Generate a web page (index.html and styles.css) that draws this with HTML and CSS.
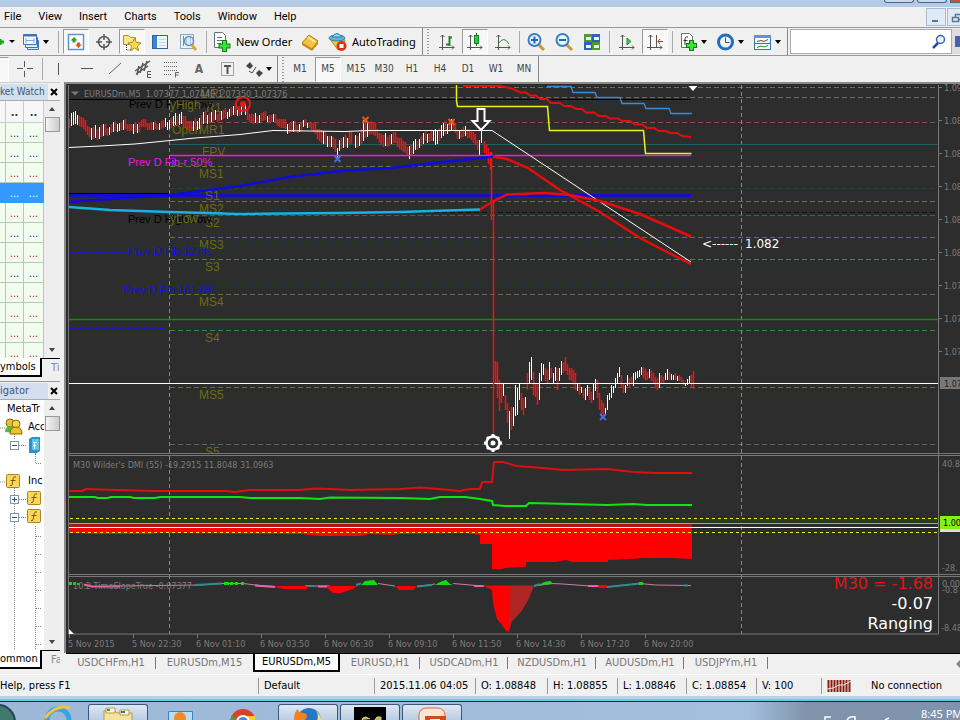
FILE: index.html
```html
<!DOCTYPE html>
<html lang="en">
<head>
<meta charset="utf-8">
<title>EURUSDm,M5</title>
<link rel="stylesheet" href="styles.css">
</head>
<body>
<header class="titlebar"><i></i><i></i><i class="close"></i></header>
<nav class="menubar">
  <button>File</button><button>View</button><button>Insert</button><button>Charts</button><button>Tools</button><button>Window</button><button>Help</button>
  <span class="mdi">
    <button aria-label="Minimize"><svg width="18" height="18"><path d="M5 12h6" stroke="#5a7492" stroke-width="2"/></svg></button>
    <button aria-label="Restore"><svg width="18" height="18" fill="none" stroke="#5a7492"><path d="M7.500 8V5.500h6v5H11M4.500 8.500h6v4h-6z" stroke-width="1.500"/></svg></button>
  </span>
</nav>

<div class="toolbar top">
  <button class="t first" aria-label="New chart"><svg width="18" height="24"><path d="M0 12h4M0 9v6" stroke="#18a818" stroke-width="3"/><path d="M9 10h6l-3 3z"/></svg></button>
  <button class="t drop" aria-label="Profiles"><svg width="20" height="20" fill="#dceaf8" stroke="#3f74b5"><path d="M6.500 8.500h11v9h-11z"/><path d="M4.500 5.500h12v10h-12z"/><path d="M2.500 2.500h13v10h-13z" fill="#f2f8ff"/><path d="M2 3.500h14" stroke-width="2"/><path d="M5 8.500h8M5 6v5M13 6v5" stroke="#86a9d0"/></svg><span class="caret"></span></button>
  <i class="sep s7"></i>
  <button class="t on" aria-label="Market Watch"><svg width="20" height="20"><rect x="2.500" y="2.500" width="15" height="15" fill="#fff" stroke="#5b93cf" stroke-width="1.500"/><path d="M8 5l3.500 3.500H9.500v2h-3v-2H4.500z" fill="#2da02d"/><path d="M12.500 16L9 12.500h2v-2h3v2h2z" fill="#e0561c"/></svg></button>
  <button class="t" aria-label="Data Window"><svg width="20" height="20" fill="none" stroke="#555" stroke-width="1.500"><circle cx="10" cy="10" r="5.500"/><path d="M10 2v6M10 12v6M2 10h6M12 10h6"/></svg></button>
  <button class="t on" aria-label="Navigator"><svg width="20" height="20"><path d="M1.500 3.500h5l2 2h5v7h-12z" fill="#f7e58a" stroke="#b39428"/><path d="M4.500 13v5h6" stroke="#444" fill="none" stroke-dasharray="1 1"/><path d="M12.500 6.500l2 4 4.500.5-3.500 3 1 4.500-4-2.500-4 2.500 1-4.500-3.500-3 4.500-.5z" fill="#f9d84c" stroke="#b08818"/></svg></button>
  <button class="t" aria-label="Terminal"><svg width="20" height="20"><rect x="2.500" y="3.500" width="15" height="13" fill="#eef6ff" stroke="#2e64a6"/><path d="M3 4h4v12H3z" fill="#3e84cc"/><path d="M9 7.500h7M9 10.500h7M9 13.500h7" stroke="#c5d6e8"/></svg></button>
  <button class="t" aria-label="Strategy Tester"><svg width="20" height="20"><rect x="2.500" y="2.500" width="13" height="14" fill="#edf2f7" stroke="#8ba7c4"/><path d="M5.500 4v10M8.500 5v8M12.500 4v10" stroke="#6a8db0"/><circle cx="11" cy="9" r="4.500" fill="#cfe4f8aa" stroke="#6791bd" stroke-width="1.500"/><path d="M14 13l4 5" stroke="#d8ab2c" stroke-width="3"/></svg></button>
  <i class="sep s8"></i>
  <button class="t label order"><svg width="22" height="22"><path d="M3.500 1.500h8l3 3v12h-11z" fill="#fff" stroke="#66737e"/><path d="M6 6.500h5M6 9.500h6M6 12.500h4" stroke="#60707f"/><path d="M13.500 9v12M7.500 15h12" stroke="#0c7f10" stroke-width="5"/><path d="M13.500 10v10M8.500 15h10" stroke="#3ee03c" stroke-width="3"/></svg>New Order</button>
  <button class="t" aria-label="MetaEditor"><svg width="20" height="20"><path d="M2 11l7-8 9 6-6 8z" fill="#f2c341" stroke="#b47b14"/><path d="M2 11l10 6 6-8v3l-6 7-10-6z" fill="#c98a1a"/><path d="M8 5l7 5" stroke="#ffeaa0" stroke-width="2"/></svg></button>
  <button class="t label auto"><svg width="22" height="22"><path d="M3 8l15 1-3 9-4 1z" fill="#f3c93b" stroke="#b88a1c"/><ellipse cx="10" cy="7" rx="8" ry="3" fill="#5fb6dc" stroke="#2d7ea8"/><path d="M5 6q5-7 10 0z" fill="#8fd3ee" stroke="#2d7ea8"/><circle cx="14.500" cy="15" r="5" fill="#d8301c"/><rect x="12.500" y="13" width="4" height="4" fill="#fff"/></svg>AutoTrading</button>
  <i class="edge s11"></i>
  <button class="t" aria-label="Bar chart"><svg width="20" height="20" fill="none" stroke="#555"><path d="M5.500 3v15M2 15.500h15M3.500 5l2-2 2 2M15 13.500l2 2-2 2"/><path d="M12.500 4v10M12 5.500h3M9 12.500h3" stroke="#268030" stroke-width="2"/></svg></button>
  <button class="t on" aria-label="Candlesticks"><svg width="20" height="20" fill="none" stroke="#555"><path d="M5.500 3v15M2 15.500h15M3.500 5l2-2 2 2M15 13.500l2 2-2 2"/><path d="M11.500 1v13" stroke="#176c1d"/><rect x="9.500" y="3.500" width="4" height="8" fill="#26cf37" stroke="#16821f"/></svg></button>
  <button class="t" aria-label="Line chart"><svg width="20" height="20" fill="none" stroke="#555"><path d="M5.500 3v15M2 15.500h15M3.500 5l2-2 2 2M15 13.500l2 2-2 2"/><path d="M5 12q6-9 11 0" stroke="#338844"/></svg></button>
  <i class="sep s5"></i>
  <button class="t" aria-label="Zoom in"><svg width="20" height="20"><path d="M12 12l6 6" stroke="#c89c2a" stroke-width="3"/><circle cx="8.500" cy="8" r="6" fill="#e8f5ff" stroke="#3a7fc6" stroke-width="2"/><path d="M5 8h7M8.500 4.500v7" stroke="#2369b8" stroke-width="2"/></svg></button>
  <button class="t" aria-label="Zoom out"><svg width="20" height="20"><path d="M12 12l6 6" stroke="#c89c2a" stroke-width="3"/><circle cx="8.500" cy="8" r="6" fill="#e8f5ff" stroke="#3a7fc6" stroke-width="2"/><path d="M5 8h7" stroke="#2369b8" stroke-width="2"/></svg></button>
  <button class="t" aria-label="Tile windows"><svg width="20" height="20"><path d="M2 2h8v8H2zM10 10h8v8h-8z" fill="#4f9a28"/><path d="M10 2h8v8h-8zM2 10h8v8H2z" fill="#2c62b8"/><path d="M4 5h5v3H4zM12 5h5v3h-5zM4 13h5v3H4zM12 13h5v3h-5z" fill="#e5f4f4"/></svg></button>
  <i class="sep s7"></i>
  <button class="t" aria-label="Auto scroll"><svg width="20" height="20" fill="none" stroke="#555"><path d="M5.500 3v15M2 15.500h15M3.500 5l2-2 2 2M15 13.500l2 2-2 2"/><path d="M10 6v7l4-3.500z" fill="#4bc95a" stroke="#2b8b35"/></svg></button>
  <button class="t on" aria-label="Chart shift"><svg width="20" height="20" fill="none" stroke="#555"><path d="M5.500 3v15M2 15.500h15M3.500 5l2-2 2 2M15 13.500l2 2-2 2M11.500 3v12"/><path d="M18 9.500h-5M15 7l-2 2.500 2 2.500" stroke="#a53a22"/></svg></button>
  <i class="sep s7"></i>
  <button class="t drop" aria-label="Indicators"><svg width="20" height="20"><path d="M2.500 1.500h8l3 3v11h-11z" fill="#fff" stroke="#66737e"/><path d="M9 5q-3-1-3 3v5M4.500 8.500h4" stroke="#333" fill="none"/><path d="M12.500 8v11M7 13.500h11" stroke="#0c7f10" stroke-width="5"/><path d="M12.500 9v9M8 13.500h9" stroke="#3ee03c" stroke-width="3"/></svg><span class="caret"></span></button>
  <button class="t drop" aria-label="Periods"><svg width="20" height="20"><circle cx="9.500" cy="10" r="7" fill="#eaf6ff" stroke="#1f6fc0" stroke-width="3"/><path d="M9.500 5.500v5h4" stroke="#6a4433" fill="none"/></svg><span class="caret"></span></button>
  <button class="t drop" aria-label="Templates"><svg width="20" height="20"><rect x="1.500" y="3.500" width="16" height="14" fill="#f3fbff" stroke="#3a75b4"/><path d="M1 4.500h17" stroke="#5c97d2" stroke-width="3"/><path d="M2 11.500h15" stroke="#3a75b4"/><path d="M4 9.500l4-1 3 1 4-2" stroke="#a03030" fill="none"/><path d="M4 15.500l4-1.500 3 1 4-1.500" stroke="#2a8a38" fill="none"/></svg><span class="caret"></span></button>
  <i class="edge s3"></i>
  <label class="search"><input type="search" aria-label="Search"><svg width="16" height="16"><circle cx="9.500" cy="5.500" r="4" fill="#eaf2ff" stroke="#3c62b4" stroke-width="1.500"/><path d="M7 9l-5 5" stroke="#2a49a0" stroke-width="2.500"/></svg></label>
  <button class="t chat" aria-label="Chat"><svg width="8" height="20"><path d="M3 4h5v11H3z" fill="#4763a5"/></svg></button>
</div>

<div class="toolbar low">
  <button class="t on cursor" aria-label="Cursor"></button>
  <button class="t" aria-label="Crosshair"><svg width="20" height="20" stroke="#555"><path d="M9.500 2v6M9.500 12v6M2 9.500h6M12 9.500h6"/></svg></button>
  <i class="sep s6"></i>
  <button class="t" aria-label="Vertical line"><svg width="20" height="20" stroke="#555"><path d="M9.500 4v12"/></svg></button>
  <button class="t" aria-label="Horizontal line"><svg width="20" height="20" stroke="#555"><path d="M4 9.500h12"/></svg></button>
  <button class="t" aria-label="Trendline"><svg width="20" height="20" stroke="#666"><path d="M4 15L16 4"/></svg></button>
  <button class="t" aria-label="Equidistant channel"><svg width="20" height="20" fill="none" stroke="#555" stroke-width="1.500"><path d="M2 12L17 2M3 15L15 7M6 7l-2 9M10 4L7 14M14 2l-3 10"/><path d="M18 12.500h-3.500v6H18M15 15.500h3" stroke-width="1"/></svg></button>
  <button class="t" aria-label="Fibonacci"><svg width="20" height="20" fill="none" stroke="#666"><path d="M3 3.500h14M3 7.500h14M3 11.500h14M3 15.500h8" stroke-dasharray="1 1"/><path d="M18 13.500h-3.500v5M14.500 16h3"/></svg></button>
  <button class="t glyph" aria-label="Text">A</button>
  <button class="t" aria-label="Text label"><svg width="20" height="20" fill="none" stroke="#555"><rect x="4.500" y="3.500" width="12" height="13" stroke-dasharray="1 1"/><path d="M7 7h7M10.500 7v8" stroke-width="2"/></svg></button>
  <button class="t drop" aria-label="Arrows"><svg width="20" height="20" fill="#444"><path d="M2 7l4-4 3 4-3 3zM12 14l3-3 4 3-4 4z"/><path d="M5 12l3 2 4-6" stroke="#444" fill="none"/></svg><span class="caret"></span></button>
  <i class="edge s9"></i>
  <button class="t">M1</button><button class="t on">M5</button><button class="t">M15</button><button class="t">M30</button><button class="t">H1</button><button class="t">H4</button><button class="t">D1</button><button class="t">W1</button><button class="t">MN</button>
  <i class="edge bare"></i>
</div>

<main class="work">
  <aside class="side">
    <section class="pane market">
      <h2><span>ket Watch</span><button aria-label="Close Market Watch"><svg width="12" height="12"><path d="M3 3l6 6M9 3l-6 6" stroke="#000" stroke-width="2"/></svg></button></h2>
      <div class="body">
        <table>
          <thead><tr><th></th><th>..</th><th>..</th></tr></thead>
          <tbody>
            <tr><td></td><td>...</td><td>...</td></tr>
            <tr><td></td><td>...</td><td>...</td></tr>
            <tr class="down"><td></td><td>...</td><td>...</td></tr>
            <tr class="sel"><td></td><td>...</td><td>...</td></tr>
            <tr class="down"><td></td><td>...</td><td>...</td></tr>
            <tr><td></td><td>...</td><td>...</td></tr>
            <tr class="down"><td></td><td>...</td><td>...</td></tr>
            <tr><td></td><td>...</td><td>...</td></tr>
            <tr class="down"><td></td><td>...</td><td>...</td></tr>
            <tr class="down"><td></td><td>...</td><td>...</td></tr>
            <tr class="down"><td></td><td>...</td><td>...</td></tr>
            <tr class="down"><td></td><td>...</td><td>...</td></tr>
          </tbody>
        </table>
        <div class="scroll"><b class="up"></b><b class="thumb"></b><b class="dn"></b></div>
      </div>
      <div class="tabs"><button class="active">ymbols</button><button>Tic</button></div>
    </section>
    <section class="pane navi">
      <h2><span>igator</span><button aria-label="Close Navigator"><svg width="12" height="12"><path d="M3 3l6 6M9 3l-6 6" stroke="#000" stroke-width="2"/></svg></button></h2>
      <div class="body">
        <div class="tree">
          <p class="root">MetaTr</p>
          <p><svg width="28" height="18"><path d="M0 10h5M14.500 16v2" stroke="#888" stroke-dasharray="1 1"/><circle cx="10" cy="5" r="4" fill="#e8c030" stroke="#8a6a10"/><path d="M5 14q0-6 6-6t5 7z" fill="#52bf35"/><circle cx="16" cy="6" r="4" fill="#f5d648" stroke="#8a6a10"/><path d="M10 16q0-7 6-7t6 7z" fill="#edc22c" stroke="#8a6a10"/></svg>Acc</p>
          <p><svg width="44" height="18"><path d="M14.500 0v4M19 9.500h7M35.500 17v1" stroke="#888" stroke-dasharray="1 1"/><rect x="10.500" y="5.500" width="8" height="8" fill="#fff" stroke="#8895a5"/><path d="M12 9.500h5" stroke="#36517c"/><path d="M29 3l3-2h8v14l-3 2h-8z" fill="#2793d2"/><path d="M32 3h7v11h-7z" fill="#63c2ee"/><path d="M33 6.500h4M33 9.500h3M34.500 6v7" stroke="#fff" fill="none"/></svg></p>
          <p><svg width="44" height="18"><path d="M35.500 0v9M36 9.500h6" stroke="#888" fill="none" stroke-dasharray="1 1"/></svg></p>
          <p><svg width="28" height="18"><path d="M0 10h5M14.500 16v2" stroke="#888" stroke-dasharray="1 1"/><use href="#fx" x="6" y="2"/></svg>Inc</p>
          <p><svg width="44" height="18"><path d="M14.500 0v18M19 9.500h7" stroke="#888" stroke-dasharray="1 1"/><rect x="10.500" y="5.500" width="8" height="8" fill="#fff" stroke="#8895a5"/><path d="M12 9.500h5M14.500 7v5" stroke="#36517c"/><use href="#fx" x="27" y="1"/></svg></p>
          <p><svg width="44" height="18"><path d="M14.500 0v18M19 9.500h7" stroke="#888" stroke-dasharray="1 1"/><rect x="10.500" y="5.500" width="8" height="8" fill="#fff" stroke="#8895a5"/><path d="M12 9.500h5" stroke="#36517c"/><use href="#fx" x="27" y="1"/></svg></p>
          <svg class="branch" width="44" height="126"><path d="M14.500 0v126M35.500 0v126M36 10.500h6M36 28.500h6M36 46.500h6M36 64.500h6M36 82.500h6M36 100.500h6M36 118.500h6" stroke="#888" stroke-dasharray="1 1"/></svg>
        </div>
        <div class="scroll"><b class="up"></b><b class="thumb"></b><b class="dn"></b></div>
      </div>
      <div class="tabs"><button class="active">ommon</button><button>Fa</button></div>
    </section>
  </aside>

  <section class="chartwin">
    <svg id="chart" viewBox="64 82 896 571" preserveAspectRatio="xMinYMin meet" role="img" aria-label="EURUSDm M5 chart">
      <defs>
        <g id="fx"><rect x=".5" y=".5" width="13" height="13" rx="1" fill="#f8d75a" stroke="#ab8420"/><path d="M10 3q-3-1-3 3l-1 5q-.5 1-2 .500M4.500 6.500h5" stroke="#7c5a08" fill="none"/></g>
        <clipPath id="main"><rect x="69" y="85" width="870" height="368"/></clipPath>
      </defs>
      <path d="M64 82h896v3H66v568h-2z" fill="#8a8a8a"/>
      <path d="M66 84h894v569H66z" fill="#2d2d2d"/>
      <g id="levels"></g>
      <path d="M169.500 85v549M741.500 85v549" stroke="#888" stroke-dasharray="4 3"/>
      <g fill="none">
        <path d="M68 99.500h623" stroke="#000"/><path d="M69 193.500h100" stroke="#000"/>
        <path d="M170 144.500h768" stroke="#1c6262"/>
        <path d="M68 319.500h870" stroke="#08900c" stroke-width="1.500"/>
        <path d="M69 195.500h622" stroke="#1010c8" stroke-width="3"/>
        <path d="M170 243.500h520M69 252.500h60M170 283.500h520M69 328.500h95" stroke="#1414d8" stroke-dasharray="6 2"/>
      </g>
      <g class="lvl" clip-path="url(#main)">
        <text x="200" y="98">MR2</text><text x="206" y="112">R1</text><text x="199" y="134">MR1</text><text x="172" y="134">Open</text><text x="202" y="156">FPV</text><text x="199" y="178">MS1</text><text x="205" y="200">S1</text><text x="199" y="213">MS2</text><text x="205" y="227">S2</text><text x="199" y="249">MS3</text><text x="205" y="271">S3</text><text x="199" y="306">MS4</text><text x="205" y="342">S4</text><text x="199" y="399">MS5</text><text x="205" y="456">S5</text>
      </g>
      <g class="prev">
        <text x="129" y="108" fill="#000">Prev D High-Low</text><text x="128" y="223" fill="#000">Prev D High-Low</text>
        <text class="olive" x="170" y="109">yHigh</text><text class="olive" x="170" y="223">yLow</text>
        <text x="128" y="166" fill="#e818e8">Prev D Fib-r 50%</text>
        <text x="128" y="255" fill="#1212dc">Prev D Fib  127%</text>
        <text x="123" y="294" fill="#1212dc">Prev D Fib  161.8%</text>
      </g>
      <g fill="none">
        <path id="reds" stroke="#f01414" stroke-width="1.500"/><path id="whites" stroke="#fff"/>
        <path d="M170 155.500h521" stroke="#f018f0" stroke-width="1.500"/>
        <path d="M69 202L110 199 170 195 240 186 290 177 340 171 390 168 480 158 495 156.500" stroke="#0c0cdc" stroke-width="2.500"/>
        <path d="M69 207L110 210 170 212 240 214 340 213 400 212 480 209.500" stroke="#16b4e0" stroke-width="2.500"/>
        <path d="M69 147.500L100 146 135 144 170 140.500 195 138 240 134.500 273 130.500 345 131.500 370 130.500 H492 L691 262" stroke="#fff"/>
        <path d="M480 209.500L492 202 507 194.500 545 193 570 195 600 201 640 214 691 236.500" stroke="#e80c0c" stroke-width="2.500"/>
        <path d="M493 156.500L507 159 528 168 560 190 600 212 640 238 665 251 691 264" stroke="#e80c0c" stroke-width="2.500"/>
        <path d="M463 86H500L513 89 520 92.500H526L530 95.500H536L540 99H547L551 103H560L564 106H571L576 109H582L586 112.500H594L599 116H606L610 118.500H618L622 121H630L635 124.500H642L647 128H654L659 131H666L670 133H677L682 136 691 137" stroke="#e80c0c" stroke-width="2"/>
        <path d="M547 86.500h24l2 6h22l2 5h23l2 6h22l2 5h23l2 5h21" stroke="#3c8ad8" stroke-width="1.300"/>
        <path d="M456.500 85v16l1 5.500h90l2 24h94l2 23h46" stroke="#f0f010" stroke-width="1.500"/>
        <path d="M68 383.500h871" stroke="#fff"/>
        <path d="M493.500 200v233" stroke="#f01414" stroke-width="1.500"/>
      </g>
      <g fill="none" stroke-width="2">
        <circle cx="243" cy="104" r="7" stroke="#f01414"/><circle cx="243" cy="104" r="2" fill="#f01414" stroke="#f01414"/>
        <path d="M362.500 117l6 6M368.500 117l-6 6M448.500 119l6 6M454.500 119l-6 6" stroke="#f0561c"/>
        <path d="M334.500 156l6 6M340.500 156l-6 6M600 414l6 6M606 414l-6 6" stroke="#4a6ae0"/>
        <path d="M477.500 109h7v12h5l-8.500 9-8.500-9h5z" fill="#2d2d2d" stroke="#fff"/>
        <circle cx="493" cy="443" r="6.500" stroke="#fff" stroke-width="2.500"/><circle cx="493" cy="443" r="2.500" fill="#fff"/>
        <path d="M493 434v2M493 450v2M484 443h2M500 443h2M487 437l1 1M499 437l-1 1M487 449l1-1M499 449l-1-1" stroke="#fff" stroke-width="3"/>
      </g>
      <path d="M688.500 86h9l-4.500 5z" fill="#fff"/>
      <path d="M71 91.500h8l-4 4z" fill="#777"/>
      <g class="tiny">
        <text x="84" y="97" xml:space="preserve">EURUSDm,M5  1.07377 1.07440 1.07350 1.07376</text>
        <text x="73" y="468">M30 Wilder's DMI (55) -19.2915 11.8048 31.0963</text>
      </g>
      <g class="note"><text x="702" y="248">&lt;------</text><text x="745" y="248">1.082</text></g>

      <path d="M69 519h870v4H69z" fill="#2a3c1c"/>
      <path d="M69 524h623v3H69z" fill="#a81818"/>
      <path d="M69 527H692V559L670 558H643L632 559 608 560V562H572L566 560 555 562H526V567L504 568 503 569H492V544H480V535L465 533 400 534 390 535 370 534 360 536H320L300 534 160 533 150 534H90L80 533H69z" fill="#f00"/>
      <g fill="none">
        <path d="M69 491H82L86 489 100 489.500 155 491H225L235 492 250 490 300 490 315 488.500 330 489 350 490 400 489 420 487.500 450 490 460 491 470 489H480L482 482H492L494 462H503L517 466 543 468 563 470 607 469 633 472 657 473H692" stroke="#dc1010" stroke-width="2"/>
        <path d="M69 497H95L98 498H108L111 497H130L134 498H155L160 497H240L250 498H300L320 499 330 497.500 400 498 430 499 440 497H465L480 499 492 501 493 505 505 506H526L529 503 570 504 607 505 633 504 647 505H692" stroke="#12e412" stroke-width="2"/>
        <path d="M69 523.500h870" stroke="#8fc42a"/><path d="M69 527.500h870" stroke="#fff"/>
        <path d="M70 518.500h869M70 532.500h869" stroke="#f4f020" stroke-dasharray="3 3"/>
      </g>

      <g fill="none">
        <path d="M110 586L200 585 222 583.500H243L260 585.500 275 586.500M305 586H330M378 583.500L395 586M417 586.500L435 584M453 583.500L482 586M534 586L552 583.500 563 584 590 586 607 587 640 583.500 655 585 691 585.500" stroke="#c880a4"/>
        <path d="M195 585L222 583.500M305 586H314M356 585L361 583.500M417 586.500L432 585M534 586L540 584M607 587L640 583.500M684 585.500h4" stroke="#2f8c8c" stroke-width="2"/>
        <path d="M84 584.500L92 586.500 120 586.500M255 585.500L275 587M318 586.500h10M474 586h10M588 586h10" stroke="#f060a8" stroke-width="2"/>
      </g>
      <path d="M482 585.500h27v46.500l-3-1-4-6-5-6-4-16-1-13-6-3zM275 586h32v3h-24l-8-2zM327 586h30l-4 3-12 4h-8l-6-5zM395 586h22l-4 4h-14zM598 585h9v3h-9z" fill="#f00"/>
      <path d="M509 585.500h25l-5 13-7 12-10 11-3 10z" fill="#b02424"/>
      <path d="M361 585l4-4 9-1 4 5zM435 585l5-3 6-2 4 4 3 1zM539 585l5-3 6-1 4 3zM69 582h3v3h-3zM73 582h3v3h-3zM77 583h3v2h-3zM224 582h5v3h-5zM230 582h3v3h-3zM235 582h3v3h-3zM241 582h3v3h-3zM639 582h4v3h-4z" fill="#14d814"/>
      <path d="M68.500 85v549h870V85M68 453.500h892M68 455.500h892M68 574.500h892M68 576.500h892" fill="none" stroke="#777"/>
      <path d="M69 629v5h5z" fill="#fff"/>
      <g class="tiny"><text x="73" y="589">10.2 TimeSlopeTrue -0.07377</text></g>
      <g class="info" text-anchor="end"><text x="933" y="589" fill="#e01414">M30 = -1.68</text><text x="933" y="609" fill="#fff">-0.07</text><text x="933" y="629" fill="#fff">Ranging</text></g>
      <g id="axis" class="tiny"></g>
    </svg>
    <nav class="charttabs">
      <button>USDCHFm,H1</button><button>EURUSDm,M15</button><button class="active">EURUSDm,M5</button><button>EURUSD,H1</button><button>USDCADm,H1</button><button>NZDUSDm,H1</button><button>AUDUSDm,H1</button><button>USDJPYm,H1</button><span class="more"></span>
    </nav>
  </section>
</main>

<footer class="status">
  <span>Help, press F1</span><span>Default</span><span>2015.11.06 04:05</span><span>O: 1.08848</span><span>H: 1.08855</span><span>L: 1.08846</span><span>C: 1.08854</span><span>V: 100</span>
  <span class="net"><svg width="24" height="12"><path d="M1.500 0v12M4.500 0v12M7.500 0v12M10.500 0v12M13.500 0v12M16.500 0v12M19.500 0v12M22.500 0v12" stroke="#8c1c10" stroke-width="2"/><path d="M0 9l6-1 6-3h5l7-4" stroke="#efe4d8" fill="none"/></svg>No connection</span>
</footer>
<div class="taskbar">
  <svg width="28" height="18"><circle cx="-2" cy="20" r="17" fill="#3f7a6c" stroke="#24435e" stroke-width="2"/></svg>
  <svg class="wide" width="60" height="18"><circle cx="30" cy="18" r="11" fill="none" stroke="#38a4e4" stroke-width="5"/><path d="M17 16Q28 2 42 6" stroke="#f0c43c" stroke-width="3" fill="none"/></svg>
  <button class="app" aria-label="Explorer"><svg width="32" height="14"><path d="M2 4h11l2 2h15v8H2z" fill="#f5e2a0" stroke="#b79a50"/><path d="M4 1h9v5H4zM18 3h9v5h-9z" fill="#fdf6d4" stroke="#b79a50"/><path d="M5 3h3" stroke="#3a9a3a" stroke-width="2"/><path d="M19 5h4" stroke="#3a6ac0" stroke-width="2"/></svg></button>
  <svg class="wide" width="64" height="18"><path d="M18.500 9.500h24v10h-24z" fill="#b9dcf2" stroke="#3c84b8"/><circle cx="30" cy="16" r="6" fill="#f08a28"/></svg>
  <svg class="wide" width="64" height="18"><circle cx="29" cy="20" r="13" fill="#d8402c"/><path d="M18 13a13 13 0 0 0 0 10l6-4z" fill="#40a048"/><path d="M28 14h13q2 6 0 9z" fill="#f4ca38"/><circle cx="29" cy="20" r="6" fill="#4a86d8" stroke="#fff" stroke-width="2"/></svg>
  <button class="app" aria-label="Firefox"><svg width="32" height="14"><circle cx="17" cy="13" r="12" fill="#2a76c4"/><path d="M2 14Q2 4 6 2q0 4 6 4 6 2 0 8z" fill="#f08420"/><path d="M24 4q6 5 5 10h-4q2-6-1-10z" fill="#f3dc7a"/></svg></button>
  <button class="app" aria-label="MetaTrader"><svg width="32" height="14"><path d="M0 0h32v14H0z"/><path d="M8 13q0-3 4-3l4 2M20 14l3-4h4v4z" stroke="#d8cf80" fill="#bdb268"/></svg></button>
  <button class="app" aria-label="PowerPoint"><svg width="32" height="14"><rect x="3" y="1" width="26" height="20" rx="7" fill="#fbe4d8" stroke="#d8683c"/><path d="M9 9h21v5H9z" fill="#d44a1c"/><path d="M14 12h10v2H14z" fill="#fff"/></svg></button>
  <div class="tray"><svg width="100" height="18" fill="none" stroke="#fff" stroke-width="1.500"><path d="M4 18v-3h6M26 18q2-4 8-3v3M64 18l4-2"/></svg><time>8:45 PM</time></div>
</div>
<script src="chart.js"></script>
</body>
</html>
```
FILE: styles.css
```css
* { box-sizing: border-box; }
html, body { height: 100%; }
body {
  margin: 0;
  display: flex;
  flex-direction: column;
  overflow: hidden;
  background: #f0f0f0;
  color: #000;
  font: 11px/14px "DejaVu Sans Condensed", "Noto Sans", sans-serif;
}
button { font: inherit; color: inherit; background: none; border: 0; margin: 0; padding: 0; white-space: nowrap; }
svg { display: block; flex: none; }

.titlebar { flex: 0 0 7px; background: #b5cbe5; display: flex; justify-content: flex-end; gap: 3px; }
.titlebar i { width: 30px; height: 3px; border: 1px solid #4d6686; border-top: 0; border-radius: 0 0 3px 3px; background: #c9daee; }
.titlebar .close { width: 10px; background: #c8503c; border-right: 0; border-radius: 0; }

.menubar { flex: 0 0 20px; display: flex; align-items: center; padding-left: 4px; gap: 17px; font: 11px/16px Roboto, "Noto Sans", sans-serif; }
.mdi { margin-left: auto; display: flex; gap: 1px; width: 34px; overflow: hidden; }
.mdi button { flex: 0 0 18px; height: 18px; border: 1px solid #a9bdd4; background: #dfeaf7; }

.toolbar { display: flex; align-items: center; border-top: 1px solid #999; }
.top { flex: 0 0 28px; }
.low { flex: 0 0 27px; color: #444; font-size: 10px; }
.t { flex: 0 0 28px; height: 25px; display: flex; align-items: center; justify-content: center; }
.t.on { flex-basis: 26px; margin: 0 1px; background: #f8f8f8; border: 1px solid #fff; border-top-color: #999; border-left-color: #999; }
.first { flex-basis: 18px; }
.drop { flex-basis: 37px; justify-content: flex-start; padding-left: 3px; gap: 2px; }
.low .drop { flex-basis: 36px; }
.label { font: 11px/14px "Noto Sans", sans-serif; gap: 3px; justify-content: flex-start; padding-left: 1px; }
.order { flex-basis: 86px; }
.auto { flex-basis: 98px; padding-left: 3px; }
.low .cursor { flex-basis: 9px; margin: 0 2px 0 0; border-left: 0; }
.glyph { font: bold 12px/14px "DejaVu Sans Condensed", sans-serif; color: #666; }
.caret { border: 3px solid transparent; border-top: 4px solid #000; border-bottom: 0; width: 0; }
.sep, .edge { align-self: stretch; display: block; }
.sep { background: linear-gradient(#aaa, #aaa) center / 1px 22px no-repeat; }
.edge { border-left: 1px solid #888; background: radial-gradient(circle, #999 30%, transparent 40%) 3px 0 / 4px 3px repeat-y; }
.edge.bare, .edge.s3 { background: none; }
.s3 { flex: 0 0 3px; } .s5 { flex: 0 0 5px; } .s6 { flex: 0 0 6px; } .s7 { flex: 0 0 7px; } .s8 { flex: 0 0 8px; } .s9 { flex: 0 0 9px; } .s11 { flex: 0 0 11px; }
.search { flex: 1 1 0; min-width: 0; overflow: hidden; display: flex; align-items: center; height: 25px; background: #fff; border: 1px solid #aaa; padding-right: 4px; }
.search input { flex: 1 1 0; width: 0; min-width: 0; padding: 0; border: 0; outline: 0; height: 20px; background: none; }
.chat { flex: 0 0 8px; background: #ddd; }

.work { flex: 1; min-height: 0; display: flex; }
.side { flex: 0 0 64px; display: flex; flex-direction: column; padding-right: 4px; overflow: hidden; }
.pane { display: flex; flex-direction: column; min-height: 0; }
.market { flex: 0 0 299px; border-top: 1px solid #ccc; }
.navi { flex: 1; border-top: 1px solid #999; }
.pane h2 { margin: 0; flex: 0 0 17px; display: flex; align-items: center; font-size: 11px; font-weight: normal; line-height: 16px; color: #44566e; }
.pane h2 span { background: #d3dfee; flex: 0 0 48px; width: 48px; white-space: nowrap; }
.pane h2 button { flex: 0 0 12px; }
.market h2 span { font-size: 10px; }
.body { flex: 1; min-height: 0; display: flex; overflow: hidden; background: #fff; border-top: 1px solid #aaa; }
.market .body { flex: 0 0 258px; }
table { flex: 0 0 44px; width: 44px; border-collapse: separate; border-spacing: 0; table-layout: fixed; align-self: flex-start; }
th, td { padding: 2px 0 0; height: 20px; text-align: center; font-size: 11px; line-height: 14px; color: #1818a0; border-right: 1px solid #b8c8b8; border-bottom: 1px solid #b8c8b8; background: #f2fdf0; width: 20px; }
th:first-child, td:first-child { width: 6px; }
th:nth-child(2), td:nth-child(2) { width: 18px; }
th { height: 22px; color: #333; background: #f6f6f6; border-color: #ccc; }
.down td { color: #b01818; }
.sel td { color: #fff; background: #3399ff; border-color: #3399ff; }
.scroll { flex: 0 0 16px; display: flex; flex-direction: column; background: #eee; }
.scroll b { align-self: center; }
.up { margin-top: 6px; border: 3px solid transparent; border-top: 0; border-bottom: 4px solid #444; }
.thumb { margin-top: 6px; width: 15px; height: 15px; background: linear-gradient(90deg, #f4f4f4, #ccc); border: 1px solid #999; }
.dn { margin-top: auto; margin-bottom: 6px; border: 3px solid transparent; border-bottom: 0; border-top: 4px solid #444; }
.tabs { flex: 0 0 24px; display: flex; align-items: flex-start; overflow: hidden; }
.tabs button { flex: none; height: 19px; text-align: left; color: #888; padding-left: 9px; border-top: 1px solid #000; }
.tabs .active { width: 42px; padding: 0; color: #000; background: #fff; border: solid #000; border-width: 0 2px 2px 0; }
.tree { flex: 0 0 44px; overflow: hidden; font-size: 11px; }
.tree p { margin: 0; height: 18px; display: flex; align-items: center; white-space: nowrap; }
.tree .root { padding-left: 7px; }

.chartwin { flex: 1; min-width: 0; display: flex; flex-direction: column; }
#chart { flex: 1; min-height: 0; width: 100%; background: #2d2d2d; }
.lvl { font: 12px "Liberation Sans", sans-serif; fill: #6c6c10; }
.prev { font: 11px "Liberation Sans", sans-serif; }
.prev .olive { font-size: 12px; fill: #6c6c10; }
.tiny { font: 9px "DejaVu Sans Condensed", sans-serif; fill: #7c7c7c; }
.note { font: 12px "DejaVu Sans", sans-serif; fill: #fff; }
.info { font: 16px "DejaVu Sans", sans-serif; }
.charttabs { flex: 0 0 21px; margin-left: 2px; display: grid; grid-template-columns: 90px 97px 87px 80px 88px 88px 88px 84px 1fr; border-top: 1px solid #000; color: #777; font-size: 11px; }
.charttabs button { background: linear-gradient(#777, #777) right center / 1px 12px no-repeat; height: 18px; }
.charttabs button:nth-child(2) { background: none; }
.charttabs .active { background: #fff; color: #000; border: solid #000; border-width: 0 2px 2px; }
.more { justify-self: end; align-self: center; border: 4px solid transparent; border-right-color: #888; }

.status { flex: 0 0 22px; display: grid; grid-template-columns: 258px 116px 101px 72px 70px 69px 70px 65px 1fr; align-items: center; border-top: 1px solid #fff; white-space: nowrap; }
.status span { padding-left: 5px; line-height: 16px; border-left: 1px solid #999; }
.status span:first-child { padding-left: 0; border: 0; }
.status .net { display: flex; align-items: center; gap: 20px; }
.taskbar { flex: 0 0 24px; display: flex; align-items: flex-end; overflow: hidden; border-top: 3px solid #b8d0ea; background: linear-gradient(#5fd0ea, #5fd0ea) top / 100% 2px no-repeat, linear-gradient(#122, #122) 0 2px / 100% 1px no-repeat, linear-gradient(90deg, #9db8d6, #a4bedd 78%, #7f93ad 84%, #7f93ad); }
.app { flex: 0 0 60px; height: 16px; margin-right: 2px; padding-top: 2px; display: flex; justify-content: center; border: 1px solid #3e5878; border-bottom: 0; border-radius: 3px 3px 0 0; background: linear-gradient(#dce8f4, #b9cde3); }
.tray { margin-left: auto; display: flex; align-items: flex-end; height: 18px; color: #fff; white-space: nowrap; }
.tray time { font: 11px/12px "Noto Sans", sans-serif; height: 12px; width: 39px; }
```
FILE: chart.js
```javascript
const NS = "http://www.w3.org/2000/svg";
function add(parent, tag, attrs, text) {
  const el = document.createElementNS(NS, tag);
  for (const k in attrs) el.setAttribute(k, attrs[k]);
  if (text) el.textContent = text;
  parent.appendChild(el);
}

// Dashed pivot levels: y and colour
const levels = document.getElementById("levels");
[[87, "#74742c"], [97, "#6c6c6c"], [122, "#8c4c54"], [166, "#6f6f45"], [188, "#234a28"],
 [201, "#6f6f35"], [212, "#111"], [215, "#2c7438"], [237, "#6f6f35"], [259, "#4f7f55"],
 [294, "#5f6f3c"], [330, "#3f8048"], [387, "#5f7040"], [444, "#4f7050"]
].forEach(([y, c]) => add(levels, "path", { d: `M170 ${y}.5H938`, stroke: c, "stroke-dasharray": "5 3" }));

// Price bars before the drop: start x, end x, top and bottom at each end, colour pattern
const runs = [
  [69, 70, 118, 127, 118, 127, "r"], [71, 77, 113, 126, 113, 124, "w"], [79, 89, 115, 125, 126, 136, "r"],
  [91, 99, 128, 140, 126, 138, "wr"], [101, 109, 125, 137, 126, 134, "rwr"], [111, 117, 124, 133, 122, 131, "rw"],
  [119, 125, 122, 130, 121, 130, "wr"], [127, 131, 122, 130, 124, 131, "r"], [133, 139, 125, 134, 121, 131, "wr"],
  [141, 151, 120, 127, 122, 130, "r"], [153, 165, 123, 130, 120, 128, "wrr"], [167, 181, 120, 129, 112, 124, "wwr"],
  [183, 191, 117, 127, 121, 131, "r"], [193, 201, 122, 131, 115, 127, "wrw"], [203, 213, 113, 124, 112, 121, "wr"],
  [215, 227, 112, 121, 110, 118, "wrr"], [229, 241, 108, 116, 104, 115, "wr"], [243, 247, 104, 112, 108, 119, "rw"],
  [249, 253, 113, 121, 115, 124, "r"], [255, 261, 115, 124, 113, 121, "wr"], [263, 273, 113, 121, 115, 122, "rrw"],
  [275, 285, 116, 124, 121, 130, "r"], [287, 301, 122, 133, 123, 131, "wrr"], [303, 309, 121, 127, 121, 127, "wr"],
  [311, 321, 122, 130, 130, 143, "r"], [323, 331, 132, 144, 136, 147, "wr"], [333, 335, 138, 149, 141, 153, "r"],
  [337, 337, 146, 159, 146, 159, "w"], [339, 347, 139, 150, 136, 147, "wr"], [349, 351, 131, 143, 132, 144, "r"],
  [355, 361, 137, 149, 129, 144, "wr"], [363, 369, 121, 141, 121, 134, "wr"], [371, 377, 121, 134, 127, 138, "r"],
  [379, 383, 132, 142, 136, 147, "r"], [385, 393, 135, 147, 133, 143, "wrr"], [395, 401, 134, 144, 138, 150, "r"],
  [403, 407, 142, 152, 145, 155, "r"], [409, 413, 145, 158, 142, 154, "wrw"], [415, 423, 141, 151, 134, 144, "wr"],
  [425, 433, 132, 142, 131, 141, "rwr"], [435, 441, 131, 146, 125, 138, "wwr"], [443, 451, 124, 136, 119, 130, "wr"],
  [453, 457, 122, 130, 128, 138, "r"], [459, 467, 129, 138, 127, 137, "wrr"], [469, 477, 128, 137, 138, 149, "r"],
  [479, 479, 139, 155, 139, 155, "w"], [481, 481, 130, 143, 130, 143, "w"], [484, 490, 140, 152, 154, 171, "r"],
  [491, 491, 152, 220, 152, 220, "r"]
];
const out = { r: "", w: "" };
runs.forEach(([x0, x1, t0, b0, t1, b1, pat]) => {
  for (let x = x0, i = 0; x <= x1; x += 2, i++) {
    const k = x1 > x0 ? (x - x0) / (x1 - x0) : 0;
    const j = (x * 7 % 5) - 2;
    out[pat[i % pat.length]] += `M${x}.5 ${Math.round(t0 + (t1 - t0) * k + j)}V${Math.round(b0 + (b1 - b0) * k + j / 2)}`;
  }
});

// Price bars after the drop, one every 2 px from x=495: colour, top, bottom
const after = "r361,383 r362,398 r380,411 r383,403 w383,396 r395,410 r403,423 w411,439 r407,430 w407,426 w385,416 w388,415 w383,400 r393,410 r398,415 w397,408 r373,390 w362,383 w357,380 r372,395 r383,397 r383,405 w373,400 w363,381 w364,375 r368,381 r370,383 w362,380 r368,378 w373,383 w367,381 r368,390 w368,381 w361,375 r362,373 r357,371 r364,375 r368,380 r368,381 r370,385 r373,390 w383,391 r383,395 w387,393 r390,398 w388,400 w385,396 r388,400 r392,403 w383,400 w379,391 r380,398 r393,410 r400,415 r403,416 w408,415 w395,410 w393,400 w385,398 w386,393 w378,388 w373,383 w367,377 r375,388 r383,393 w385,393 w375,386 r378,388 r377,383 w373,386 w372,380 w371,378 w370,377 w367,375 r367,378 r369,380 r372,380 w369,378 r370,381 r373,383 r377,388 r378,390 w373,388 r375,383 r377,383 w373,380 w369,380 r372,380 w374,380 w375,380 r373,380 w376,381 r375,381 r377,382 r380,385 w383,386 w379,385 w376,383 r375,387 r371,389";
after.split(" ").forEach((s, i) => {
  const [a, b] = s.slice(1).split(",");
  out[s[0]] += `M${495 + i * 2}.5 ${a}V${b}`;
});
document.getElementById("reds").setAttribute("d", out.r);
document.getElementById("whites").setAttribute("d", out.w);

// Price and time scales
const axis = document.getElementById("axis");
["1.09", "1.08", "1.08", "1.08", "1.08", "1.08", "1.07", "1.07", "1.07"].forEach((p, i) => {
  const y = 87 + i * 33;
  add(axis, "path", { d: `M938 ${y}.5h4`, stroke: "#777" });
  add(axis, "text", { x: 944, y: y + 4 }, p);
});
add(axis, "path", { d: "M940 377h20v12h-20z", fill: "#777" });
add(axis, "text", { x: 944, y: 387, style: "fill:#222" }, "1.07");
add(axis, "path", { d: "M940 527h20v5h-20z", fill: "#ddd" });
add(axis, "path", { d: "M940 516h20v13h-20z", fill: "#84f018" });
add(axis, "text", { x: 943, y: 526, style: "fill:#000" }, "1.00");
add(axis, "text", { x: 942, y: 467 }, "40.8");
add(axis, "text", { x: 942, y: 571 }, "-28.");
add(axis, "text", { x: 942, y: 587 }, "0.00");
add(axis, "text", { x: 942, y: 593 }, "-0.8");
add(axis, "text", { x: 941, y: 631 }, "-8.48");
["5 Nov 2015", "5 Nov 22:30", "6 Nov 01:10", "6 Nov 03:50", "6 Nov 06:30", "6 Nov 09:10", "6 Nov 11:50", "6 Nov 14:30", "6 Nov 17:20", "6 Nov 20:00"].forEach((t, i) => {
  add(axis, "path", { d: `M${69 + i * 64}.5 634v4`, stroke: "#777" });
  add(axis, "text", { x: 68 + i * 64, y: 647 }, t);
});
```
